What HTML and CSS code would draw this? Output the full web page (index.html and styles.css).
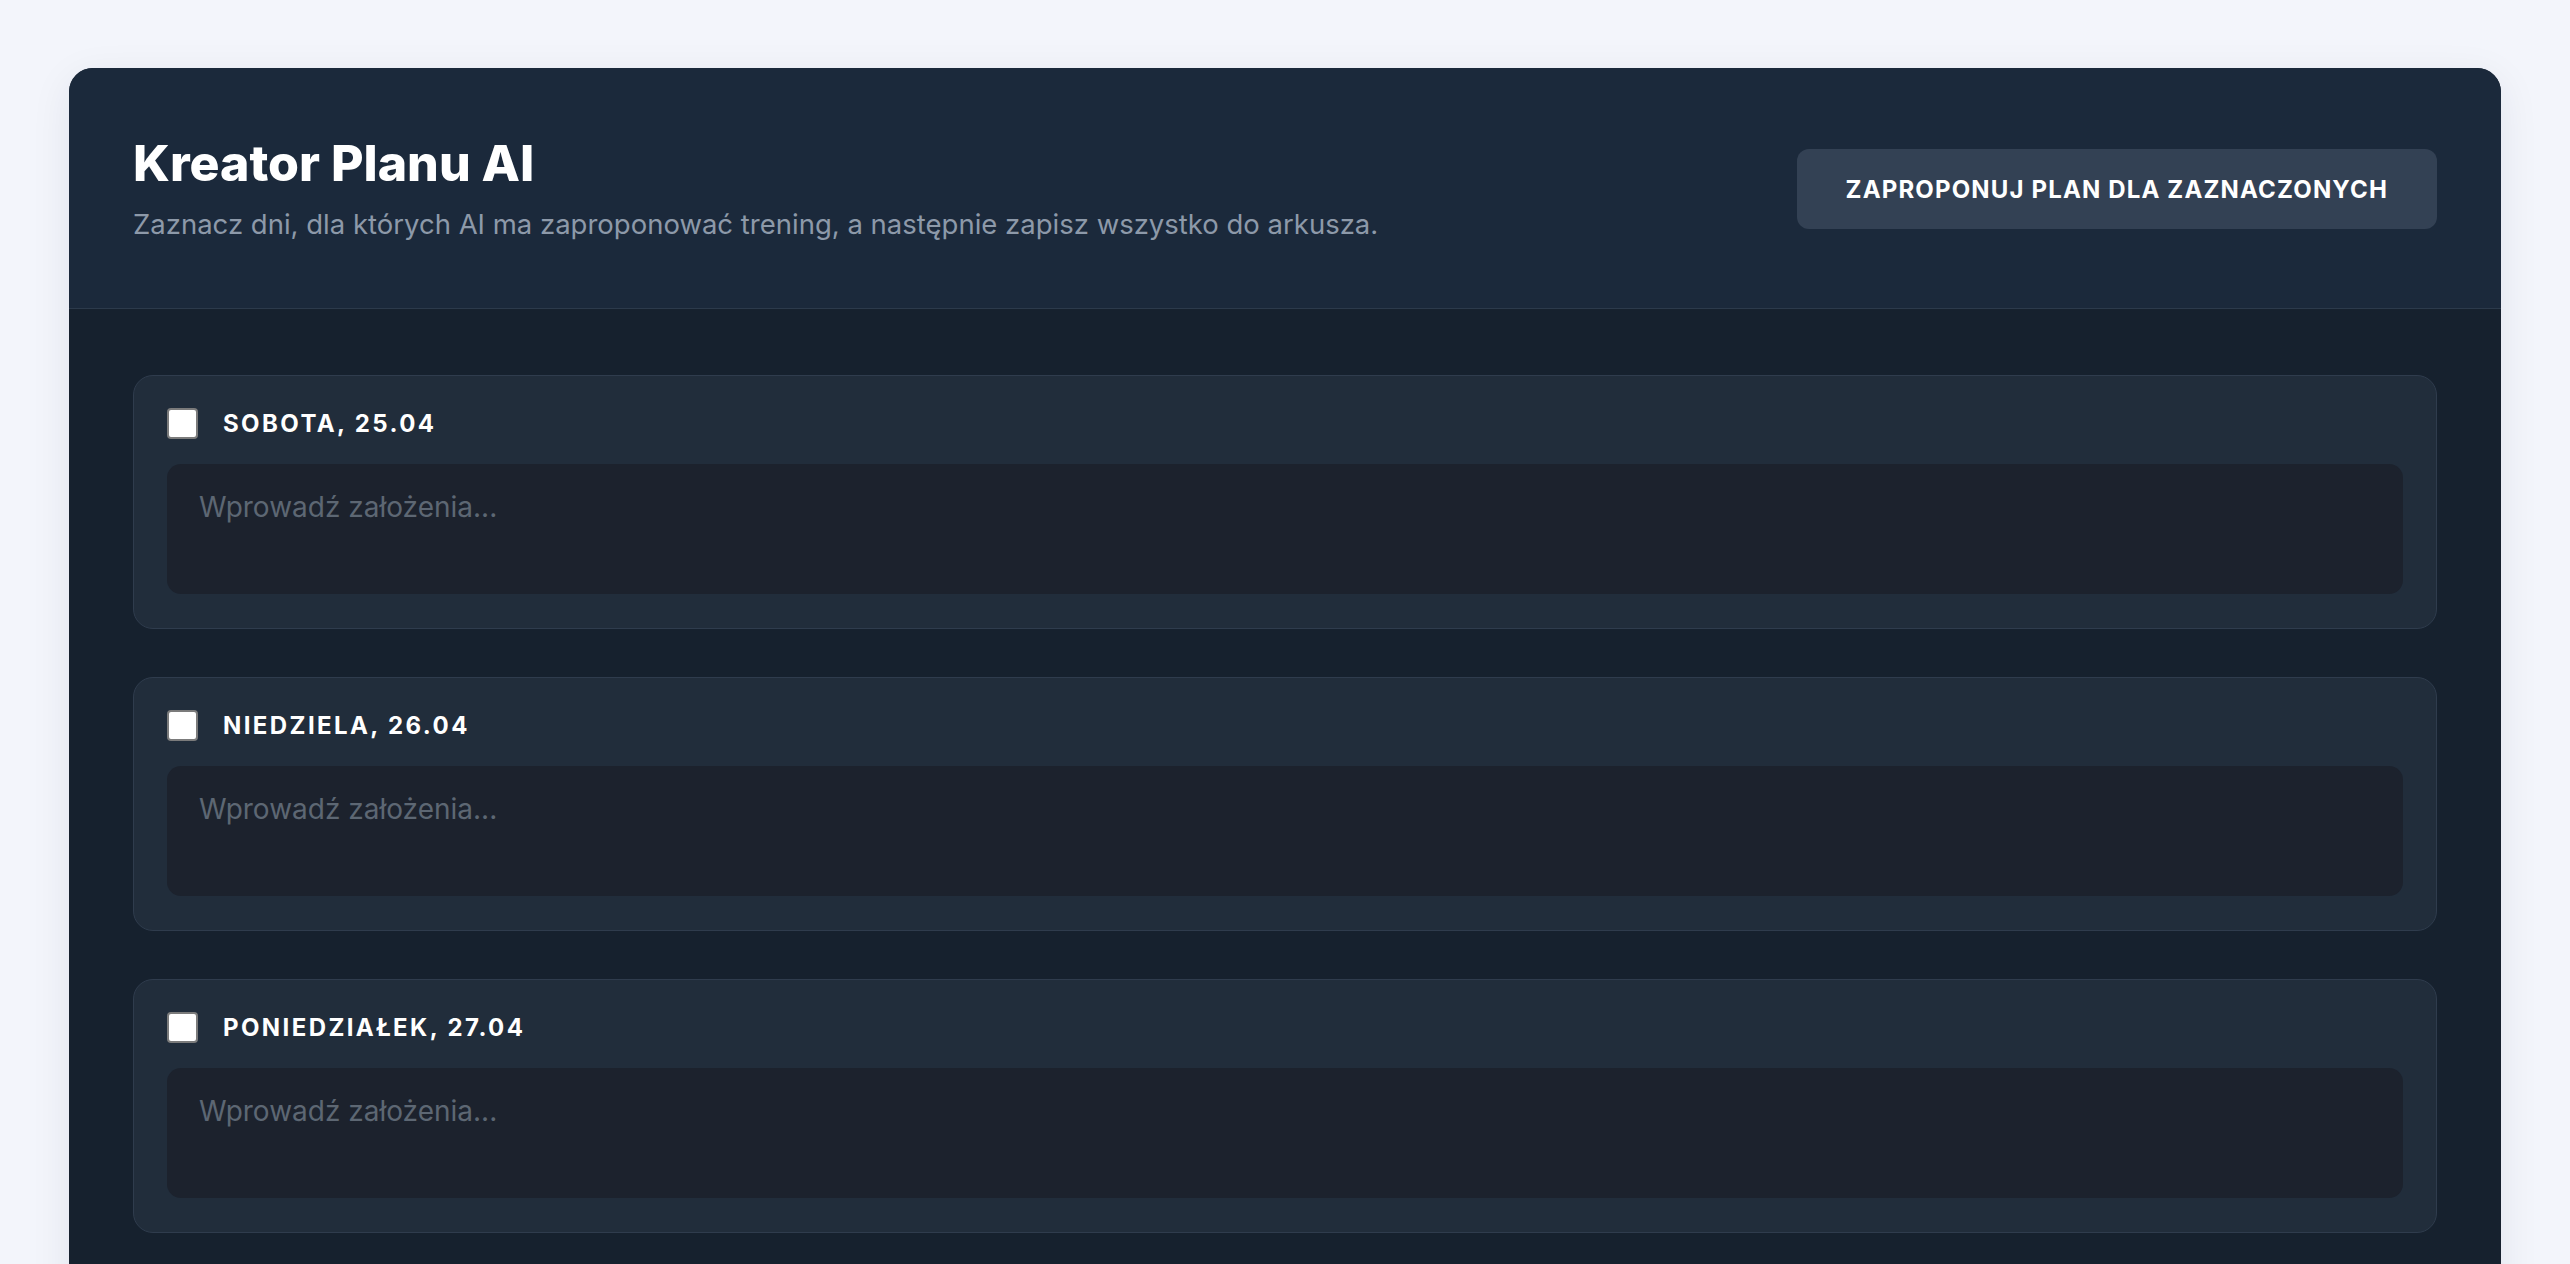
FILE: index.html
```html
<!DOCTYPE html>
<html lang="pl">
<head>
  <meta charset="UTF-8">
  <meta name="viewport" content="width=device-width, initial-scale=1.0">
  <title>Kreator Planu AI</title>
  <link rel="stylesheet" href="styles.css">
</head>
<body>
  <div class="planner">
    <div class="planner-header">
      <div>
        <h1>Kreator Planu AI</h1>
        <p class="subtitle">Zaznacz dni, dla których AI ma zaproponować trening, a następnie zapisz wszystko do arkusza.</p>
      </div>
      <button type="button" class="suggest-btn">Zaproponuj plan dla zaznaczonych</button>
    </div>

    <div class="planner-body">
      <div class="day">
        <label class="day-head">
          <input type="checkbox" name="day_0425">
          <span>Sobota, 25.04</span>
        </label>
        <textarea placeholder="Wprowadź założenia..."></textarea>
      </div>

      <div class="day">
        <label class="day-head">
          <input type="checkbox" name="day_0426">
          <span>Niedziela, 26.04</span>
        </label>
        <textarea placeholder="Wprowadź założenia..."></textarea>
      </div>

      <div class="day">
        <label class="day-head">
          <input type="checkbox" name="day_0427">
          <span>Poniedziałek, 27.04</span>
        </label>
        <textarea placeholder="Wprowadź założenia..."></textarea>
      </div>

      <div class="day">
        <label class="day-head">
          <input type="checkbox" name="day_0428">
          <span>Wtorek, 28.04</span>
        </label>
        <textarea placeholder="Wprowadź założenia..."></textarea>
      </div>
    </div>
  </div>
</body>
</html>
```

FILE: styles.css
```css
body {
  margin: 0;
  padding: 68px 69px;
  background-color: #f3f5fb;
  font-family: Inter, "Noto Sans", sans-serif;
}
.planner {
  background-color: #16212e;
  border-radius: 24px;
  overflow: hidden;
  box-shadow: 0 10px 40px rgba(30, 41, 59, 0.08);
}
.planner-header {
  display: flex;
  justify-content: space-between;
  align-items: center;
  padding: 66px 64px 64px;
  background-color: #1b293b;
  border-bottom: 1px solid #2c3a4b;
}
h1 {
  margin: 0;
  font-family: Inter, sans-serif;
  font-weight: 800;
  font-size: 50px;
  line-height: 58px;
  letter-spacing: 0;
  color: #ffffff;
}
.subtitle {
  margin: 12px 0 0;
  font-size: 27.5px;
  line-height: 40px;
  color: #8d99a9;
}
.suggest-btn {
  padding: 0 49px;
  height: 80px;
  background-color: #334154;
  color: #ffffff;
  border: none;
  border-radius: 12px;
  font-family: Inter, sans-serif;
  font-weight: 700;
  font-size: 24px;
  letter-spacing: 1.15px;
  text-transform: uppercase;
  cursor: pointer;
}
.suggest-btn:hover {
  background-color: #3d4d62;
}
.planner-body {
  display: flex;
  flex-direction: column;
  gap: 48px;
  padding: 66px 64px 64px;
}
.day {
  background-color: #212d3b;
  border: 1px solid #2f3c4d;
  border-radius: 20px;
  padding: 32px 33px 34px;
}
.day-head {
  display: flex;
  align-items: center;
  gap: 25px;
  cursor: pointer;
}
.day-head input {
  appearance: none;
  width: 31px;
  height: 31px;
  margin: 0;
  background-color: #ffffff;
  border: 2px solid #7b7b7b;
  border-radius: 4px;
  cursor: pointer;
}
.day-head input:checked {
  background-color: #3b82f6;
  border-color: #3b82f6;
}
.day-head span {
  font-weight: 700;
  font-size: 24px;
  letter-spacing: 2.4px;
  text-transform: uppercase;
  color: #ffffff;
}
textarea {
  display: block;
  box-sizing: border-box;
  width: 100%;
  height: 130px;
  margin-top: 25px;
  padding: 24px 32px;
  background-color: #1c222d;
  border: none;
  border-radius: 14px;
  font-family: Inter, sans-serif;
  font-size: 28px;
  line-height: 38px;
  color: #e2e8f0;
  resize: none;
  outline: none;
}
textarea::placeholder {
  color: #5d6773;
}
```
